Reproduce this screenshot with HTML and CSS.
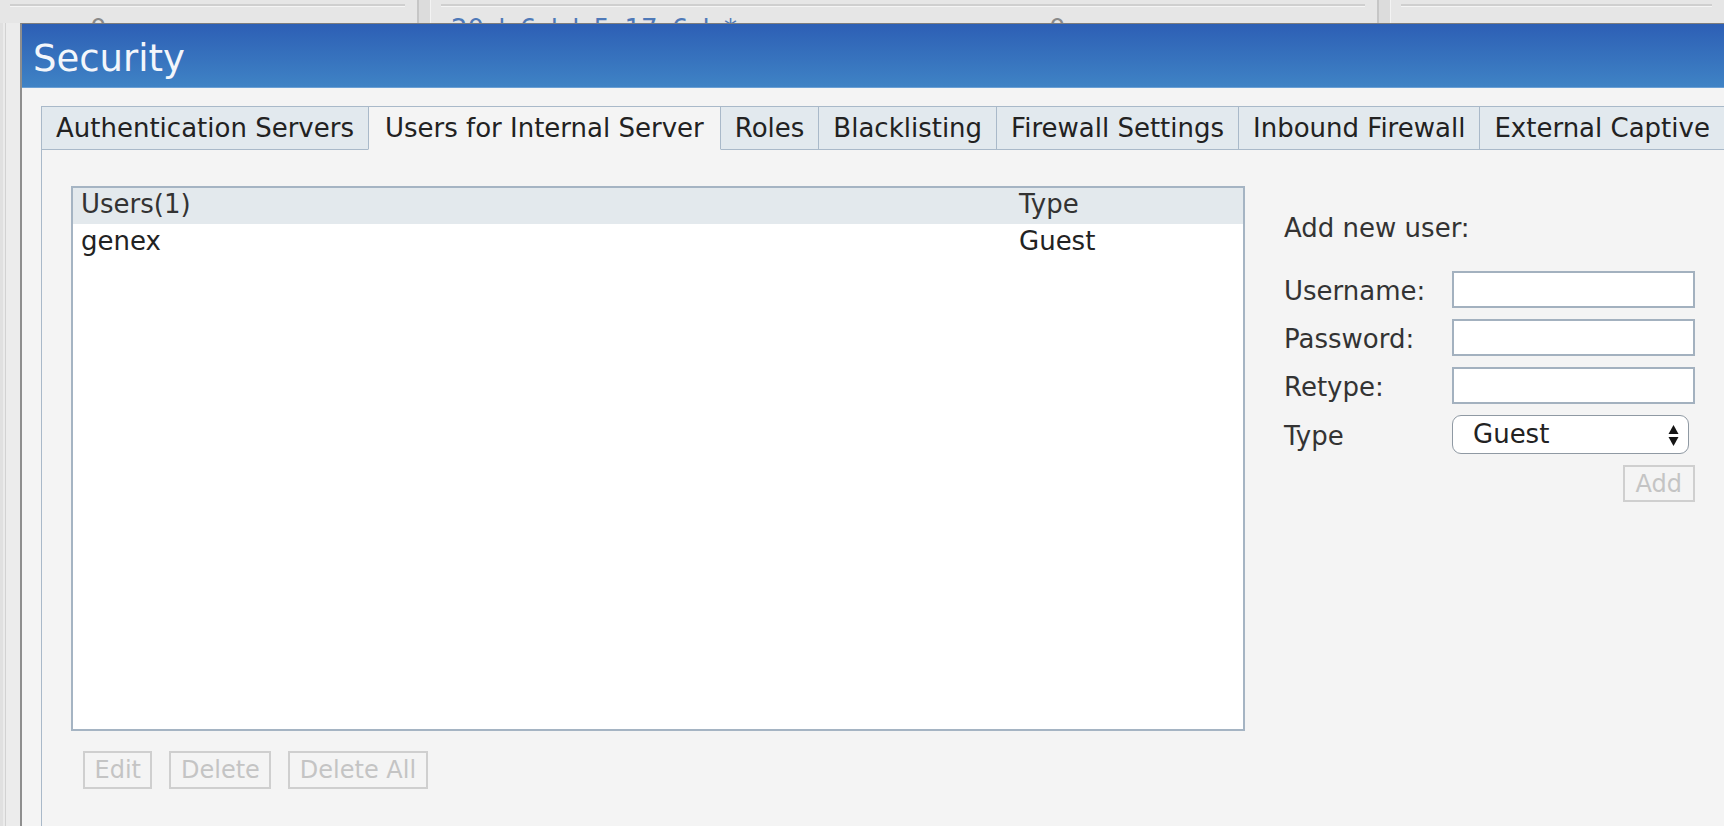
FILE: index.html
```html
<!DOCTYPE html>
<html lang="en">
<head>
<meta charset="utf-8">
<title>Security</title>
<link rel="stylesheet" href="styles.css">
</head>
<body>
  <div class="topbar">
    <div class="tb-panel tb-p1">
      <div class="tb-rule"></div>
      <div class="tb-text"><span class="tb-gray">0</span></div>
    </div>
    <div class="tb-divider"></div>
    <div class="tb-panel tb-p2">
      <div class="tb-rule"></div>
      <div class="tb-text"><span class="tb-blue">20 l 6 l l 5 17 6 l *</span><span class="tb-gray">0</span></div>
    </div>
    <div class="tb-divider"></div>
    <div class="tb-panel tb-p3">
      <div class="tb-rule"></div>
    </div>
  </div>

  <div class="main">
    <div class="gutter"></div>
    <section class="dialog">
      <header class="dialog-title">Security</header>
      <div class="dialog-body">
        <nav class="tabs">
          <div class="tab">Authentication Servers</div>
          <div class="tab active">Users for Internal Server</div>
          <div class="tab">Roles</div>
          <div class="tab">Blacklisting</div>
          <div class="tab">Firewall Settings</div>
          <div class="tab">Inbound Firewall</div>
          <div class="tab">External Captive</div>
        </nav>
        <div class="panel">
          <div class="panel-row">
            <div class="left-col">
              <div class="userlist">
                <div class="ul-head"><span>Users(1)</span><span>Type</span></div>
                <div class="ul-row"><span>genex</span><span>Guest</span></div>
              </div>
              <div class="list-actions">
                <button class="btn" disabled>Edit</button>
                <button class="btn" disabled>Delete</button>
                <button class="btn" disabled>Delete All</button>
              </div>
            </div>
            <div class="form-col">
              <div class="form-title">Add new user:</div>
              <div class="form-grid">
                <label class="form-label">Username:</label>
                <input class="field" type="text">
                <label class="form-label">Password:</label>
                <input class="field" type="password">
                <label class="form-label">Retype:</label>
                <input class="field" type="password">
                <label class="form-label">Type</label>
                <div class="select">
                  <span>Guest</span>
                  <svg class="select-arrows" width="11" height="22" viewBox="0 0 11 22">
                    <path d="M0.5 10 L5.5 1 L10.5 10 Z" fill="#151515"/>
                    <path d="M0.5 13 L10.5 13 L5.5 22 Z" fill="#151515"/>
                  </svg>
                </div>
                <div></div>
                <button class="btn add-btn" disabled>Add</button>
              </div>
            </div>
          </div>
        </div>
      </div>
    </section>
  </div>
</body>
</html>
```

FILE: styles.css
```css
* {
  box-sizing: border-box;
}

html,
body {
  margin: 0;
  height: 100%;
}

body {
  overflow: hidden;
  background: #e9e9e9;
  font-family: "DejaVu Sans", Verdana, sans-serif;
  font-size: 26px;
  color: #222;
  display: flex;
  flex-direction: column;
}

/* ---------- background strip behind the dialog ---------- */
.topbar {
  height: 23px;
  flex: none;
  display: flex;
  overflow: hidden;
  background: #e6e6e6;
}

.tb-panel {
  display: flex;
  flex-direction: column;
  flex: none;
}

.tb-p1 {
  width: 417px;
}

.tb-p2 {
  width: 946px;
}

.tb-p3 {
  flex: 1;
}

.tb-rule {
  margin: 4px 12px 0 10px;
  border-top: 2px solid #cfcfcf;
  border-bottom: 1px solid #f5f5f5;
}

.tb-text {
  margin-top: 7px;
  line-height: 30px;
  white-space: nowrap;
  display: flex;
}

.tb-p1 .tb-text {
  padding-left: 90px;
}

.tb-p2 .tb-text {
  padding-left: 20px;
}

.tb-blue {
  color: #4f79b8;
  width: 598px;
  word-spacing: 6px;
}

.tb-gray {
  color: #8a8a8a;
}

.tb-divider {
  width: 14px;
  flex: none;
  background: #dcdcdc;
  border-left: 2px solid #c6c6c6;
  border-right: 1px solid #f3f3f3;
}

/* ---------- main ---------- */
.main {
  flex: 1;
  display: flex;
  min-height: 0;
}

.gutter {
  width: 20px;
  flex: none;
  background: linear-gradient(to right, #e0e0e0 0 3px, #ebebeb 3px 5px, #d2d2d2 5px 6px, #ececec 6px);
}

.dialog {
  flex: none;
  width: 1760px;
  display: flex;
  flex-direction: column;
  border-left: 2px solid #8e8e8e;
  border-top: 1px solid #7d7d7d;
  background: #f4f4f4;
}

.dialog-title {
  height: 64px;
  padding: 7px 0 0 11px;
  line-height: 56px;
  font-size: 37px;
  color: #f3f6fb;
  background: linear-gradient(#2d5fb5, #3f83c5);
  border-bottom: 1px solid #6a9fd4;
}

.dialog-body {
  flex: 1;
  display: flex;
  flex-direction: column;
  padding: 18px 0 0 19px;
  min-height: 0;
}

/* ---------- tabs ---------- */
.tabs {
  display: flex;
  flex: none;
}

.tab {
  border: 1px solid #a9b9c9;
  margin-right: -1px;
  padding: 0 14px;
  line-height: 42px;
  background: #e2e9ee;
  color: #222;
  white-space: nowrap;
}

.tab.active {
  padding: 0 16px;
  background: #f4f4f4;
  border-bottom-color: #f4f4f4;
  position: relative;
  z-index: 1;
}

.panel {
  flex: 1;
  margin-top: -1px;
  border-top: 1px solid #a9b9c9;
  border-left: 1px solid #a9b9c9;
  padding: 36px 0 0 29px;
}

.panel-row {
  display: flex;
  gap: 39px;
  align-items: flex-start;
}

/* ---------- user list ---------- */
.userlist {
  width: 1174px;
  height: 545px;
  border: 2px solid #a5b4c3;
  background: #fff;
}

.ul-head,
.ul-row {
  display: grid;
  grid-template-columns: 938px 1fr;
  padding-left: 8px;
  line-height: 33px;
}

.ul-head {
  background: #e3e9ed;
  padding-bottom: 3px;
  color: #333;
}

.ul-row {
  padding-top: 1px;
}

.list-actions {
  display: flex;
  gap: 17px;
  padding: 20px 0 0 12px;
}

.btn {
  height: 38px;
  padding: 0 9.5px;
  border: 2px solid #cfcfcf;
  border-radius: 0;
  background: transparent;
  color: #c4c4c4;
  font-family: "DejaVu Sans", Verdana, sans-serif;
  font-size: 24px;
  line-height: 34px;
}

/* ---------- add user form ---------- */
.form-col {
  width: 411px;
  color: #333;
}

.form-title {
  margin-top: 27px;
  margin-bottom: 28px;
  line-height: 30px;
}

.form-grid {
  display: grid;
  grid-template-columns: 168px 243px;
  row-gap: 11px;
  align-items: center;
}

.form-label {
  line-height: 30px;
  padding-top: 3px;
}

.field {
  width: 243px;
  height: 37px;
  margin: 0;
  border: 2px solid #a3b1bf;
  background: #fff;
  font-family: inherit;
  font-size: 22px;
}

.select {
  width: 237px;
  height: 39px;
  border: 1px solid #8f99a3;
  border-radius: 9px;
  background: #fff;
  display: flex;
  align-items: center;
  justify-content: space-between;
  padding: 0 9px 0 20px;
  line-height: 37px;
  color: #222;
}

.select-arrows {
  display: block;
}

.add-btn {
  justify-self: end;
  height: 37px;
  padding: 0 11px;
}
```
